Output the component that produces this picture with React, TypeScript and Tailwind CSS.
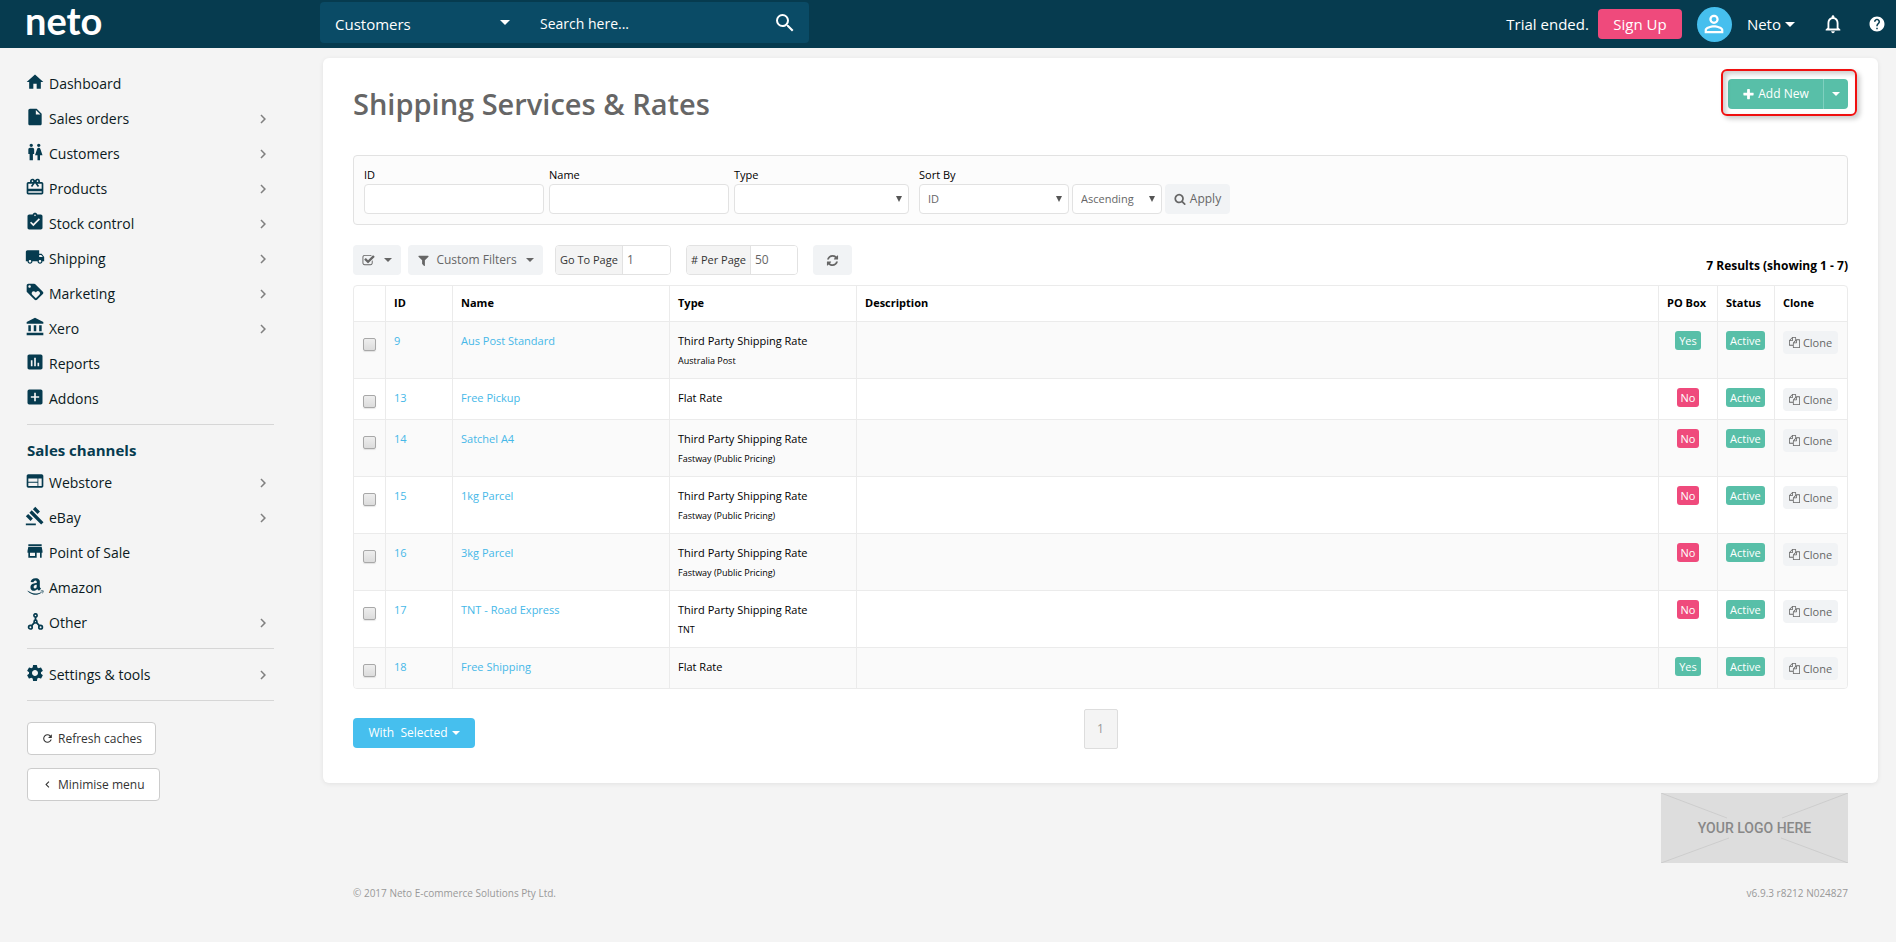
import React, { useState } from 'react';
import type { IconType } from 'react-icons';
import {
  MdAccountBalance,
  MdAddBox,
  MdAssessment,
  MdAssignmentTurnedIn,
  MdCardGiftcard,
  MdChevronLeft,
  MdChevronRight,
  MdGavel,
  MdHelp,
  MdHome,
  MdInsertDriveFile,
  MdLocalShipping,
  MdLoyalty,
  MdNotificationsNone,
  MdPersonOutline,
  MdRefresh,
  MdSearch,
  MdSettings,
  MdStore,
  MdWc,
  MdWeb,
} from 'react-icons/md';
import { FaAmazon } from 'react-icons/fa';
import clsx from 'clsx';

const GLYPHS = {
  plus: 'M1600 736v192q0 40-28 68t-68 28h-416v416q0 40-28 68t-68 28h-192q-40 0-68-28t-28-68v-416h-416q-40 0-68-28t-28-68v-192q0-40 28-68t68-28h416v-416q0-40 28-68t68-28h192q40 0 68 28t28 68v416h416q40 0 68 28t28 68z',
  search:
    'M1216 832q0-185-131.5-316.5t-316.5-131.5-316.5 131.5-131.5 316.5 131.5 316.5 316.5 131.5 316.5-131.5 131.5-316.5zm512 832q0 52-38 90t-90 38q-54 0-90-38l-343-342q-179 124-399 124-143 0-273.5-55.5t-225-150-150-225-55.5-273.5 55.5-273.5 150-225 225-150 273.5-55.5 273.5 55.5 225 150 150 225 55.5 273.5q0 220-124 399l343 343q37 37 37 90z',
  check:
    'M1472 930v318q0 119-84.5 203.5t-203.5 84.5h-832q-119 0-203.5-84.5t-84.5-203.5v-832q0-119 84.5-203.5t203.5-84.5h832q63 0 117 25 15 7 18 23 3 17-9 29l-49 49q-10 10-23 10-3 0-9-2-23-6-45-6h-832q-66 0-113 47t-47 113v832q0 66 47 113t113 47h832q66 0 113-47t47-113v-254q0-13 9-22l64-64q10-10 23-10 6 0 12 3 20 8 20 29zm231-489l-814 814q-24 24-57 24t-57-24l-430-430q-24-24-24-57t24-57l110-110q24-24 57-24t57 24l263 263 647-647q24-24 57-24t57 24l110 110q24 24 24 57t-24 57z',
  filter:
    'M1595 295q17 41-14 70l-493 493v742q0 42-39 59-13 5-25 5-27 0-45-19l-256-256q-19-19-19-45v-486l-493-493q-31-29-14-70 17-39 59-39h1280q42 0 59 39z',
  refresh:
    'M1639 1056q0 5-1 7-64 268-268 434.5t-478 166.5q-146 0-282.5-55t-243.5-157l-129 129q-19 19-45 19t-45-19-19-45v-448q0-26 19-45t45-19h448q26 0 45 19t19 45-19 45l-137 137q71 66 161 102t187 36q134 0 250-65t186-179q11-17 53-117 8-23 30-23h192q13 0 22.5 9.5t9.5 22.5zm25-800v448q0 26-19 45t-45 19h-448q-26 0-45-19t-19-45 19-45l138-138q-148-137-349-137-134 0-250 65t-186 179q-11 17-53 117-8 23-30 23h-199q-13 0-22.5-9.5t-9.5-22.5v-7q65-268 270-434.5t480-166.5q146 0 284 55.5t245 156.5l130-129q19-19 45-19t45 19 19 45z',
  files:
    'M1696 384q40 0 68 28t28 68v1216q0 40-28 68t-68 28h-960q-40 0-68-28t-28-68v-288h-544q-40 0-68-28t-28-68v-672q0-40 20-88t48-76l408-408q28-28 76-48t88-20h416q40 0 68 28t28 68v328q68-40 128-40h416zm-544 213l-299 299h299v-299zm-640-384l-299 299h299v-299zm196 647l316-316v-416h-384v416q0 40-28 68t-68 28h-416v640h512v-256q0-40 20-88t48-76zm956 804v-1152h-384v416q0 40-28 68t-68 28h-416v640h896z',
};

const Glyph = ({ name, className }: { name: keyof typeof GLYPHS; className?: string }) => (
  <svg viewBox="0 0 1792 1792" fill="currentColor" aria-hidden="true" className={clsx('shrink-0', className)}>
    <path d={GLYPHS[name]} />
  </svg>
);

const Caret = ({ className }: { className?: string }) => (
  <svg viewBox="0 0 8 4" fill="currentColor" aria-hidden="true" className={clsx('shrink-0', className)}>
    <path d="M0 0h8L4 4z" />
  </svg>
);

const NetworkIcon = () => (
  <svg viewBox="0 0 17 17" fill="none" stroke="currentColor" strokeWidth="1.7" aria-hidden="true" className="size-[17px]">
    <circle cx="8.5" cy="2.4" r="1.6" />
    <circle cx="8.5" cy="8.6" r="1.4" />
    <circle cx="3.4" cy="14.2" r="1.8" />
    <circle cx="13.6" cy="14.2" r="1.8" />
    <path d="M8.5 4v3.2M7.4 9.6l-2.7 3M9.6 9.6l2.7 3" />
  </svg>
);

interface NavItem {
  label: string;
  icon: IconType | (() => React.JSX.Element);
  more?: boolean;
}

const MAIN_NAV: NavItem[] = [
  { label: 'Dashboard', icon: MdHome },
  { label: 'Sales orders', icon: MdInsertDriveFile, more: true },
  { label: 'Customers', icon: MdWc, more: true },
  { label: 'Products', icon: MdCardGiftcard, more: true },
  { label: 'Stock control', icon: MdAssignmentTurnedIn, more: true },
  { label: 'Shipping', icon: MdLocalShipping, more: true },
  { label: 'Marketing', icon: MdLoyalty, more: true },
  { label: 'Xero', icon: MdAccountBalance, more: true },
  { label: 'Reports', icon: MdAssessment },
  { label: 'Addons', icon: MdAddBox },
];

const CHANNEL_NAV: NavItem[] = [
  { label: 'Webstore', icon: MdWeb, more: true },
  { label: 'eBay', icon: MdGavel, more: true },
  { label: 'Point of Sale', icon: MdStore },
  { label: 'Amazon', icon: () => <FaAmazon className="size-[19px]" /> },
  { label: 'Other', icon: NetworkIcon, more: true },
];

const SETTINGS_NAV: NavItem[] = [{ label: 'Settings & tools', icon: MdSettings, more: true }];

interface Rate {
  id: number;
  name: string;
  type: string;
  carrier?: string;
  poBox: boolean;
}

const RATES: Rate[] = [
  { id: 9, name: 'Aus Post Standard', type: 'Third Party Shipping Rate', carrier: 'Australia Post', poBox: true },
  { id: 13, name: 'Free Pickup', type: 'Flat Rate', poBox: false },
  { id: 14, name: 'Satchel A4', type: 'Third Party Shipping Rate', carrier: 'Fastway (Public Pricing)', poBox: false },
  { id: 15, name: '1kg Parcel', type: 'Third Party Shipping Rate', carrier: 'Fastway (Public Pricing)', poBox: false },
  { id: 16, name: '3kg Parcel', type: 'Third Party Shipping Rate', carrier: 'Fastway (Public Pricing)', poBox: false },
  { id: 17, name: 'TNT - Road Express', type: 'Third Party Shipping Rate', carrier: 'TNT', poBox: false },
  { id: 18, name: 'Free Shipping', type: 'Flat Rate', poBox: true },
];

const NavList = ({ items }: { items: NavItem[] }) => (
  <ul>
    {items.map(({ label, icon: Icon, more }) => (
      <li key={label}>
        <a href="#" className="flex h-[35px] items-center gap-1 pl-[25px] pr-[51px] text-sm text-[#0b1a22]">
          <span className="flex size-5 shrink-0 items-center justify-center pb-[3px] text-[#063b4f]">
            <Icon className="size-5 shrink-0" />
          </span>
          <span className="grow">{label}</span>
          {more && <MdChevronRight className="size-[18px] text-[#808080]" />}
        </a>
      </li>
    ))}
  </ul>
);

const TopBar = () => (
  <header className="flex h-12 items-center bg-[#063b4f] text-white">
    <a
      href="#"
      className="mb-2 w-[320px] shrink-0 pl-[25px] font-['Lato',sans-serif] text-[38px] leading-[40px] font-bold"
    >
      neto
    </a>
    <div className="mb-[3px] flex h-[41px] w-[489px] shrink-0 items-center rounded bg-[#0a4b66]">
      <div className="relative flex items-center">
        <select
          aria-label="Search area"
          className="w-[204px] appearance-none bg-transparent pt-[3px] pl-[15px] text-[15px] leading-5 outline-none"
        >
          <option>Customers</option>
        </select>
        <Caret className="pointer-events-none absolute right-[14px] h-[5px] w-[10px]" />
      </div>
      <input
        type="text"
        aria-label="Search"
        placeholder="Search here..."
        className="min-w-0 grow bg-transparent pt-[2px] pl-4 text-sm text-white outline-none placeholder:text-white"
      />
      <button aria-label="Run search" className="mr-3">
        <MdSearch className="size-6" />
      </button>
    </div>
    <div className="ml-auto flex items-center text-[15px]">
      <span>Trial ended.</span>
      <button className="ml-[9px] h-[30px] w-[84px] rounded bg-[#ef4a7c]">Sign Up</button>
      <button aria-label="Account" className="ml-[15px] flex size-[35px] items-center justify-center rounded-full bg-[#46bfee]">
        <MdPersonOutline className="size-7" />
      </button>
      <button className="ml-[15px] flex items-center gap-1">
        Neto
        <Caret className="h-[5px] w-[10px]" />
      </button>
      <button aria-label="Notifications" className="ml-[27px]">
        <MdNotificationsNone className="size-[22px]" />
      </button>
      <button aria-label="Help" className="ml-6 mr-[10px]">
        <MdHelp className="size-[18px]" />
      </button>
    </div>
  </header>
);

const Sidebar = () => (
  <nav className="w-[323px] shrink-0 pt-[18px]">
    <NavList items={MAIN_NAV} />
    <hr className="mt-2 mr-[49px] ml-[27px] border-[#d6d6d6]" />
    <h2 className="mt-[15px] mb-[5px] pl-[27px] text-[15px] leading-5 font-bold text-[#063b4f]">Sales channels</h2>
    <NavList items={CHANNEL_NAV} />
    <hr className="mt-2 mr-[49px] mb-2 ml-[27px] border-[#d6d6d6]" />
    <NavList items={SETTINGS_NAV} />
    <hr className="mt-2 mr-[49px] ml-[27px] border-[#d6d6d6]" />
    <div className="mt-[21px] flex flex-col items-start gap-[13px] pl-[27px] text-xs text-[#333]">
      <button className="flex h-[33px] w-[129px] items-center gap-1 rounded border border-[#ccc] bg-white pl-[13px]">
        <MdRefresh className="size-[13px]" />
        Refresh caches
      </button>
      <button className="flex h-[33px] w-[133px] items-center gap-1 rounded border border-[#ccc] bg-white pl-[13px]">
        <MdChevronLeft className="size-[13px]" />
        Minimise menu
      </button>
    </div>
  </nav>
);

const FieldSelect = ({ id, label, options, className }: { id: string; label?: string; options: string[]; className: string }) => (
  <div className="relative flex items-center">
    <select
      id={id}
      aria-label={label}
      className={clsx(
        'h-[30px] appearance-none rounded border border-[#e2e2e2] bg-white pl-2 text-[11px] text-[#666] outline-none',
        className,
      )}
    >
      {options.map((option) => (
        <option key={option}>{option}</option>
      ))}
    </select>
    <svg viewBox="0 0 6 6" fill="#555" aria-hidden="true" className="pointer-events-none absolute right-[7px] size-[6px]">
      <path d="M0 0h6L3 6z" />
    </svg>
  </div>
);

const inputClass = 'h-[30px] rounded border border-[#e2e2e2] bg-white px-2 outline-none';
const greyButton = 'flex h-[30px] items-center justify-center rounded bg-[#f1f3f5] text-[#666]';

const FilterBar = () => (
  <form
    onSubmit={(e) => e.preventDefault()}
    className="flex items-start rounded border border-[#e2e2e2] bg-[#fcfcfc] px-[10px] pt-[10px] pb-[10px] text-[11px] text-black"
  >
    <div className="mr-[5px] flex flex-col">
      <label htmlFor="f-id" className="leading-[18px]">ID</label>
      <input id="f-id" type="text" className={clsx(inputClass, 'w-[180px]')} />
    </div>
    <div className="mr-[5px] flex flex-col">
      <label htmlFor="f-name" className="leading-[18px]">Name</label>
      <input id="f-name" type="text" className={clsx(inputClass, 'w-[180px]')} />
    </div>
    <div className="mr-[10px] flex flex-col">
      <label htmlFor="f-type" className="leading-[18px]">Type</label>
      <FieldSelect id="f-type" options={['']} className="w-[175px]" />
    </div>
    <div className="flex flex-col">
      <label htmlFor="f-sort" className="leading-[18px]">Sort By</label>
      <div className="flex gap-[3px]">
        <FieldSelect id="f-sort" options={['ID']} className="w-[150px]" />
        <FieldSelect id="f-order" label="Sort order" options={['Ascending', 'Descending']} className="w-[90px]" />
        <button className={clsx(greyButton, 'w-[65px] gap-1 text-xs')}>
          <Glyph name="search" className="size-3" />
          Apply
        </button>
      </div>
    </div>
  </form>
);

const NumberField = ({ id, label, value, className }: { id: string; label: string; value: string; className: string }) => (
  <div className={clsx('flex h-[30px] overflow-hidden rounded border border-[#e2e2e2]', className)}>
    <label htmlFor={id} className="flex items-center border-r border-[#e2e2e2] bg-[#f4f4f4] px-1 text-[11px] text-[#333]">
      {label}
    </label>
    <input
      id={id}
      type="text"
      defaultValue={value}
      className="w-0 min-w-0 grow bg-white pl-1 text-xs text-[#666] outline-none"
    />
  </div>
);

const Toolbar = () => (
  <div className="mt-5 flex items-start">
    <button aria-label="Select rows" className={clsx(greyButton, 'w-12 gap-[9px]')}>
      <Glyph name="check" className="size-[13px]" />
      <Caret className="h-1 w-2" />
    </button>
    <button className={clsx(greyButton, 'ml-[7px] w-[135px] gap-[6px] text-xs')}>
      <Glyph name="filter" className="size-[13px]" />
      Custom Filters
      <Caret className="ml-[3px] h-1 w-2" />
    </button>
    <NumberField id="go-to" label="Go To Page" value="1" className="ml-3 w-[116px]" />
    <NumberField id="per-page" label="# Per Page" value="50" className="ml-[15px] w-[112px]" />
    <button aria-label="Reload" className={clsx(greyButton, 'ml-[15px] w-[39px]')}>
      <Glyph name="refresh" className="size-[13px]" />
    </button>
    <p className="mt-[11px] ml-auto text-xs leading-5 font-bold text-black">7 Results (showing 1 - 7)</p>
  </div>
);

const Badge = ({ children, tone }: { children: React.ReactNode; tone: 'green' | 'pink' }) => (
  <span
    className={clsx(
      'inline-block h-[19px] rounded-[3px] px-1 text-[11px] leading-[19px] font-medium text-white',
      tone === 'green' ? 'bg-[#58bfa8]' : 'bg-[#ef4a7c]',
    )}
  >
    {children}
  </span>
);

const headCell = 'h-[36px] border-r border-b border-[#ebebeb] px-2 text-left text-[11px] font-bold text-black last:border-r-0';
const bodyCell =
  'border-r border-b border-[#ebebeb] px-2 pt-[9px] pb-2 align-top leading-5 last:border-r-0 group-last:border-b-0';

const RatesTable = () => {
  const [selected, setSelected] = useState<number[]>([]);

  const toggle = (id: number) =>
    setSelected((ids) => (ids.includes(id) ? ids.filter((i) => i !== id) : [...ids, id]));

  return (
    <div className="mt-[9px] overflow-hidden rounded border border-[#ebebeb]">
      <table className="w-full table-fixed border-separate border-spacing-0 text-[11px] text-black">
        <colgroup>
          <col className="w-[32px]" />
          <col className="w-[67px]" />
          <col className="w-[217px]" />
          <col className="w-[187px]" />
          <col />
          <col className="w-[59px]" />
          <col className="w-[57px]" />
          <col className="w-[72px]" />
        </colgroup>
        <thead>
          <tr>
            <th className={headCell} aria-label="Select" />
            <th className={headCell}>ID</th>
            <th className={headCell}>Name</th>
            <th className={headCell}>Type</th>
            <th className={headCell}>Description</th>
            <th className={clsx(headCell, 'whitespace-nowrap')}>PO Box</th>
            <th className={headCell}>Status</th>
            <th className={headCell}>Clone</th>
          </tr>
        </thead>
        <tbody>
          {RATES.map((rate) => (
            <tr key={rate.id} className="group odd:bg-[#fafafa]">
              <td className={bodyCell}>
                <input
                  type="checkbox"
                  aria-label={`Select ${rate.name}`}
                  checked={selected.includes(rate.id)}
                  onChange={() => toggle(rate.id)}
                  className="mt-[7px] ml-px block size-[13px] appearance-none rounded-[2px] border border-[#a8a8a8] bg-linear-to-b from-[#eee] to-[#dcdcdc] shadow-[0_1px_1px_rgba(0,0,0,0.1)] checked:from-[#46bfee] checked:to-[#46bfee]"
                />
              </td>
              <td className={bodyCell}>
                <a href="#" className="text-[#46b8e8]">{rate.id}</a>
              </td>
              <td className={bodyCell}>
                <a href="#" className="text-[#46b8e8]">{rate.name}</a>
              </td>
              <td className={bodyCell}>
                {rate.type}
                {rate.carrier && <div className="text-[9px] leading-[19px]">{rate.carrier}</div>}
              </td>
              <td className={bodyCell} />
              <td className={clsx(bodyCell, 'text-center')}>
                <Badge tone={rate.poBox ? 'green' : 'pink'}>{rate.poBox ? 'Yes' : 'No'}</Badge>
              </td>
              <td className={bodyCell}>
                <Badge tone="green">Active</Badge>
              </td>
              <td className={bodyCell}>
                <button className="flex h-[23px] w-[55px] items-center justify-center gap-[3px] rounded bg-[#f1f3f5] text-[11px] text-[#666]">
                  <Glyph name="files" className="size-[11px]" />
                  Clone
                </button>
              </td>
            </tr>
          ))}
        </tbody>
      </table>
    </div>
  );
};

const AddNewButton = () => (
  <div className="relative mt-[21px] flex h-[30px] text-white">
    <button className="flex w-[95px] items-center justify-center gap-[3px] rounded-l bg-[#58bfa8] text-xs font-medium">
      <Glyph name="plus" className="size-[13px]" />
      Add New
    </button>
    <button
      aria-label="More add options"
      className="flex w-[25px] items-center justify-center rounded-r border-l border-[#7fd0bf] bg-[#58bfa8]"
    >
      <Caret className="h-1 w-2" />
    </button>
    <span
      aria-hidden="true"
      className="pointer-events-none absolute -top-[10px] -right-[9px] -bottom-[7px] -left-[7px] rounded-md border-2 border-[#f01010] shadow-[3px_3px_5px_rgba(0,0,0,0.2),inset_3px_3px_5px_rgba(0,0,0,0.2)]"
    />
  </div>
);

const LogoPlaceholder = () => (
  <div className="relative flex h-[70px] w-[187px] items-center justify-center bg-[#ddd]">
    <svg viewBox="0 0 187 70" fill="none" stroke="#cdcdcd" aria-hidden="true" className="absolute inset-0">
      <path d="M0 0l66 25M187 0l-66 25M0 70l68-25M187 70l-67-25" />
    </svg>
    <span className="font-['Roboto',sans-serif] text-sm font-medium text-[#888]">YOUR LOGO HERE</span>
  </div>
);

export default function App() {
  return (
    <div className="min-h-screen bg-[#f4f4f4] font-['Open_Sans','Noto_Sans',sans-serif]">
      <TopBar />
      <div className="flex items-start">
        <Sidebar />
        <div className="mr-[18px] min-w-0 grow pt-[10px]">
          <main className="rounded-md bg-white px-[30px] pb-[34px] shadow-[0_1px_5px_rgba(0,0,0,0.08)]">
            <div className="flex h-[97px] items-start justify-between">
              <h1 className="mt-[26px] text-[29px] leading-10 font-semibold text-[#666]">Shipping Services &amp; Rates</h1>
              <AddNewButton />
            </div>
            <FilterBar />
            <Toolbar />
            <RatesTable />
            <div className="mt-5 grid grid-cols-[1fr_auto_1fr] items-start">
              <button className="mt-[9px] flex h-[30px] w-[122px] items-center justify-center rounded bg-[#46bfee] text-xs font-medium whitespace-pre text-white">
                With  Selected
                <Caret className="ml-1 h-1 w-2" />
              </button>
              <button className="h-10 w-[34px] rounded-[2px] border border-[#ddd] bg-[#f4f4f4] text-xs text-[#999]">1</button>
            </div>
          </main>
          <footer className="px-[30px] pt-[10px] text-[10px] text-[#999]">
            <div className="flex justify-end">
              <LogoPlaceholder />
            </div>
            <div className="mt-5 flex justify-between leading-5">
              <span>© 2017 Neto E-commerce Solutions Pty Ltd.</span>
              <span>v6.9.3 r8212 N024827</span>
            </div>
          </footer>
        </div>
      </div>
    </div>
  );
}
